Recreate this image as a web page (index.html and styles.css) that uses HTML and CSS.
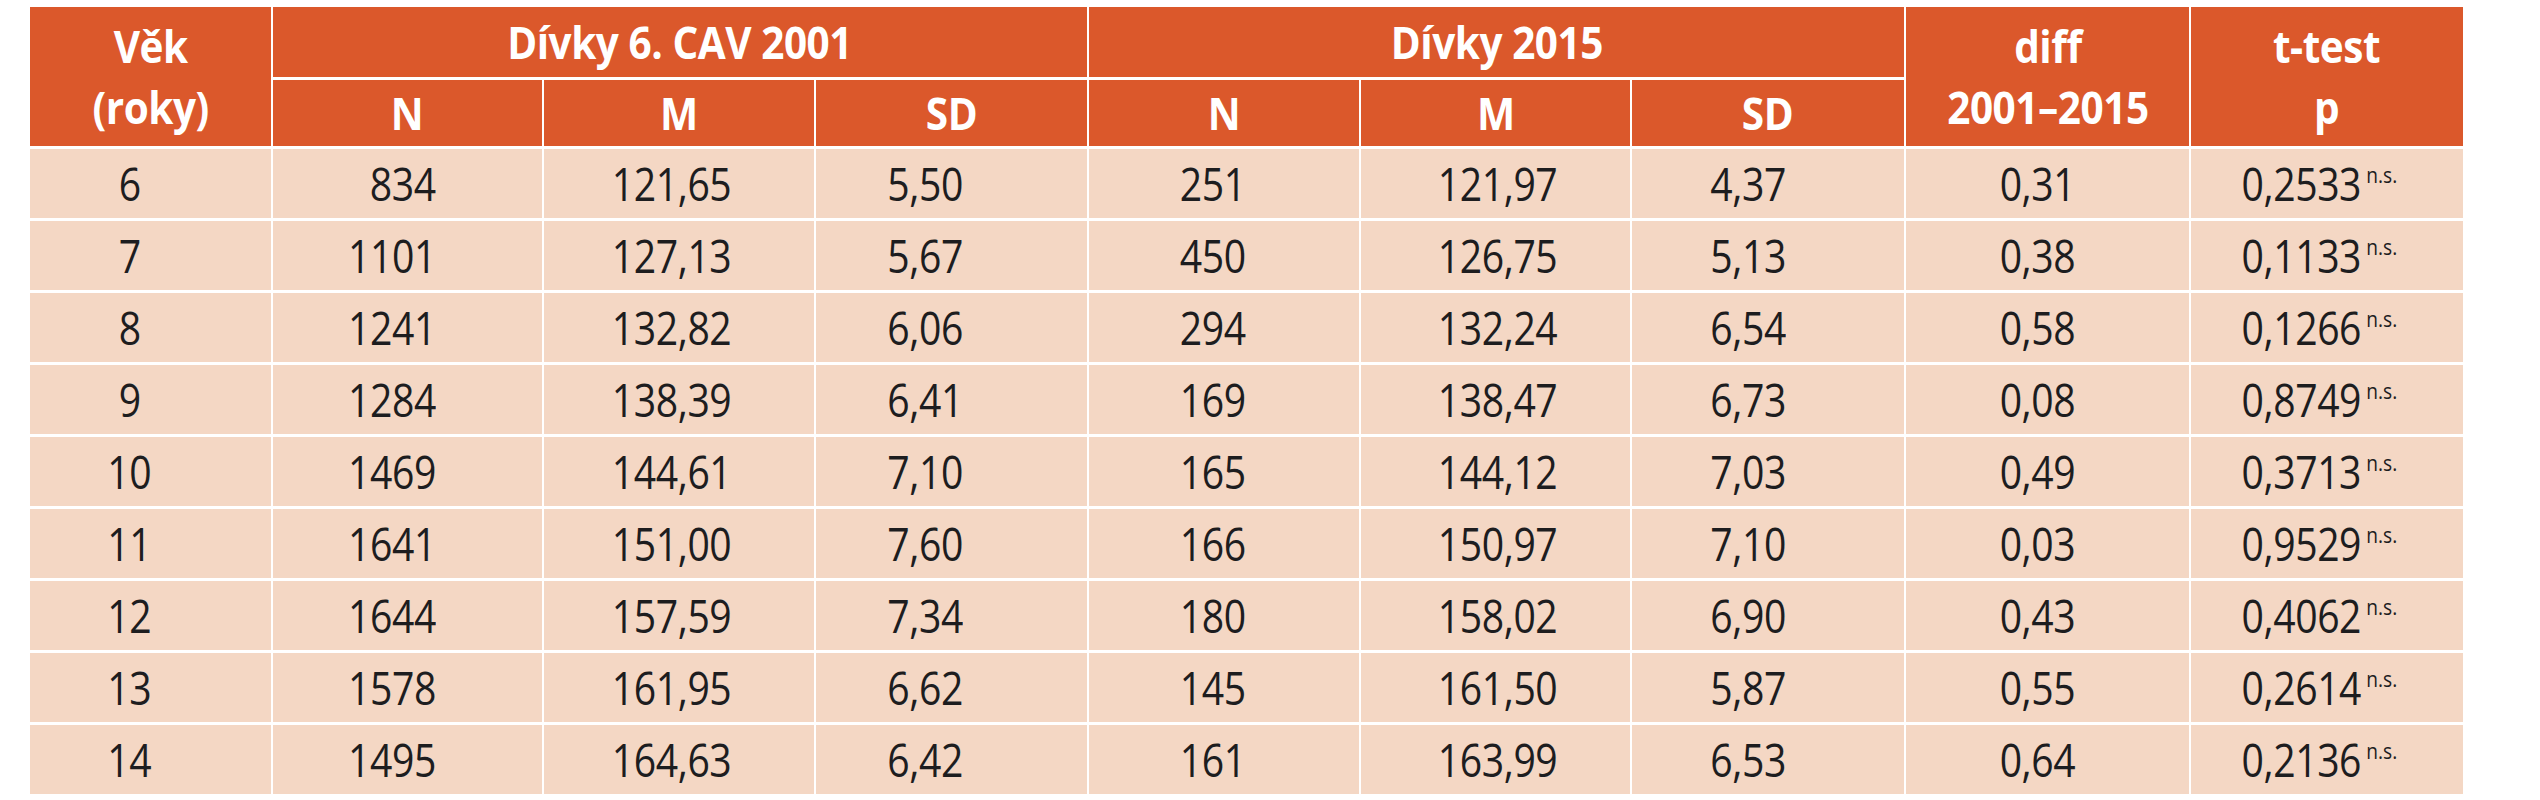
FILE: index.html
```html
<!DOCTYPE html>
<html lang="cs">
<head>
<meta charset="utf-8">
<title>Dívky 6. CAV 2001 vs 2015</title>
<link rel="stylesheet" href="styles.css">
</head>
<body>
<table class="data">
  <colgroup>
    <col class="c-age">
    <col class="c-n">
    <col class="c-m">
    <col class="c-sd">
    <col class="c-n2">
    <col class="c-m2">
    <col class="c-sd2">
    <col class="c-diff">
    <col class="c-p">
  </colgroup>
  <thead>
    <tr class="h1">
      <th rowspan="2" class="two"><span class="v">Věk<br>(roky)</span></th>
      <th colspan="3"><span class="v">Dívky 6. CAV 2001</span></th>
      <th colspan="3"><span class="v">Dívky 2015</span></th>
      <th rowspan="2" class="two"><span class="v">diff<br>2001–2015</span></th>
      <th rowspan="2" class="two"><span class="v">t-test<br>p</span></th>
    </tr>
    <tr class="h2">
      <th><span class="v">N</span></th><th><span class="v">M</span></th><th><span class="v">SD</span></th>
      <th><span class="v">N</span></th><th><span class="v">M</span></th><th><span class="v">SD</span></th>
    </tr>
  </thead>
  <tbody>
    <tr><td class="age"><span class="v">6</span></td><td class="n"><span class="v">834</span></td><td class="m"><span class="v">121,65</span></td><td class="sd"><span class="v">5,50</span></td><td class="n2"><span class="v">251</span></td><td class="m2"><span class="v">121,97</span></td><td class="sd2"><span class="v">4,37</span></td><td class="diff"><span class="v">0,31</span></td><td class="p"><span class="v">0,2533<sup>n.s.</sup></span></td></tr>
    <tr><td class="age"><span class="v">7</span></td><td class="n"><span class="v">1101</span></td><td class="m"><span class="v">127,13</span></td><td class="sd"><span class="v">5,67</span></td><td class="n2"><span class="v">450</span></td><td class="m2"><span class="v">126,75</span></td><td class="sd2"><span class="v">5,13</span></td><td class="diff"><span class="v">0,38</span></td><td class="p"><span class="v">0,1133<sup>n.s.</sup></span></td></tr>
    <tr><td class="age"><span class="v">8</span></td><td class="n"><span class="v">1241</span></td><td class="m"><span class="v">132,82</span></td><td class="sd"><span class="v">6,06</span></td><td class="n2"><span class="v">294</span></td><td class="m2"><span class="v">132,24</span></td><td class="sd2"><span class="v">6,54</span></td><td class="diff"><span class="v">0,58</span></td><td class="p"><span class="v">0,1266<sup>n.s.</sup></span></td></tr>
    <tr><td class="age"><span class="v">9</span></td><td class="n"><span class="v">1284</span></td><td class="m"><span class="v">138,39</span></td><td class="sd"><span class="v">6,41</span></td><td class="n2"><span class="v">169</span></td><td class="m2"><span class="v">138,47</span></td><td class="sd2"><span class="v">6,73</span></td><td class="diff"><span class="v">0,08</span></td><td class="p"><span class="v">0,8749<sup>n.s.</sup></span></td></tr>
    <tr><td class="age"><span class="v">10</span></td><td class="n"><span class="v">1469</span></td><td class="m"><span class="v">144,61</span></td><td class="sd"><span class="v">7,10</span></td><td class="n2"><span class="v">165</span></td><td class="m2"><span class="v">144,12</span></td><td class="sd2"><span class="v">7,03</span></td><td class="diff"><span class="v">0,49</span></td><td class="p"><span class="v">0,3713<sup>n.s.</sup></span></td></tr>
    <tr><td class="age"><span class="v">11</span></td><td class="n"><span class="v">1641</span></td><td class="m"><span class="v">151,00</span></td><td class="sd"><span class="v">7,60</span></td><td class="n2"><span class="v">166</span></td><td class="m2"><span class="v">150,97</span></td><td class="sd2"><span class="v">7,10</span></td><td class="diff"><span class="v">0,03</span></td><td class="p"><span class="v">0,9529<sup>n.s.</sup></span></td></tr>
    <tr><td class="age"><span class="v">12</span></td><td class="n"><span class="v">1644</span></td><td class="m"><span class="v">157,59</span></td><td class="sd"><span class="v">7,34</span></td><td class="n2"><span class="v">180</span></td><td class="m2"><span class="v">158,02</span></td><td class="sd2"><span class="v">6,90</span></td><td class="diff"><span class="v">0,43</span></td><td class="p"><span class="v">0,4062<sup>n.s.</sup></span></td></tr>
    <tr><td class="age"><span class="v">13</span></td><td class="n"><span class="v">1578</span></td><td class="m"><span class="v">161,95</span></td><td class="sd"><span class="v">6,62</span></td><td class="n2"><span class="v">145</span></td><td class="m2"><span class="v">161,50</span></td><td class="sd2"><span class="v">5,87</span></td><td class="diff"><span class="v">0,55</span></td><td class="p"><span class="v">0,2614<sup>n.s.</sup></span></td></tr>
    <tr><td class="age"><span class="v">14</span></td><td class="n"><span class="v">1495</span></td><td class="m"><span class="v">164,63</span></td><td class="sd"><span class="v">6,42</span></td><td class="n2"><span class="v">161</span></td><td class="m2"><span class="v">163,99</span></td><td class="sd2"><span class="v">6,53</span></td><td class="diff"><span class="v">0,64</span></td><td class="p"><span class="v">0,2136<sup>n.s.</sup></span></td></tr>
  </tbody>
</table>
</body>
</html>
```
FILE: styles.css
```css
html, body {
  margin: 0;
  padding: 0;
  background: #ffffff;
}

body {
  padding: 7px 0 0 30px;
  font-family: "Open Sans", "Noto Sans", "Liberation Sans", sans-serif;
  color: #1d1d1f;
}

.data {
  border-collapse: collapse;
  table-layout: fixed;
  width: 2433px;
  font-size: 45px;
  letter-spacing: -0.5px;
}

.c-age  { width: 242px; }
.c-n    { width: 271px; }
.c-m    { width: 272px; }
.c-sd   { width: 273px; }
.c-n2   { width: 272px; }
.c-m2   { width: 271px; }
.c-sd2  { width: 274px; }
.c-diff { width: 285px; }
.c-p    { width: 273px; }

.data th,
.data td {
  padding: 0;
  border-left: 2px solid #ffffff;
  border-right: 2px solid #ffffff;
  border-bottom: 3px solid #ffffff;
  vertical-align: middle;
  white-space: nowrap;
  line-height: 1;
}

.data tr > :first-child { border-left: 0; }
.data tr > :last-child { border-right: 0; }
.data tbody tr:last-child td { border-bottom: 0; }

/* condensed look of the original typeface */
.v {
  display: inline-block;
  transform: scaleX(0.87);
  transform-origin: center center;
}

.data th {
  background: #db582b;
  color: #ffffff;
  font-weight: 700;
  text-align: center;
}

.data th .v { transform: scaleX(0.9); }

.h1 { height: 71px; }
.h2 { height: 69px; }

.data th.two {
  line-height: 61px;
}

.data td {
  background: #f4d7c4;
  height: 69px;
  text-align: right;
}

.data td.age  { text-align: center; padding-right: 42px; }
.data td.n    { padding-right: 106px; }
.data td.m    { padding-right: 83px; }
.data td.sd   { padding-right: 124px; }
.data td.n2   { padding-right: 113px; }
.data td.m2   { padding-right: 73px; }
.data td.sd2  { padding-right: 118px; }
.data td.diff { text-align: center; padding-right: 20px; }
.data td.p    { text-align: center; padding-right: 16px; }

.data td.n .v,
.data td.m .v,
.data td.sd .v,
.data td.n2 .v,
.data td.m2 .v,
.data td.sd2 .v {
  transform-origin: right center;
}

.data sup {
  font-size: 22px;
  letter-spacing: 0;
  vertical-align: 0;
  position: relative;
  top: -18px;
  margin-left: 6px;
}
```
